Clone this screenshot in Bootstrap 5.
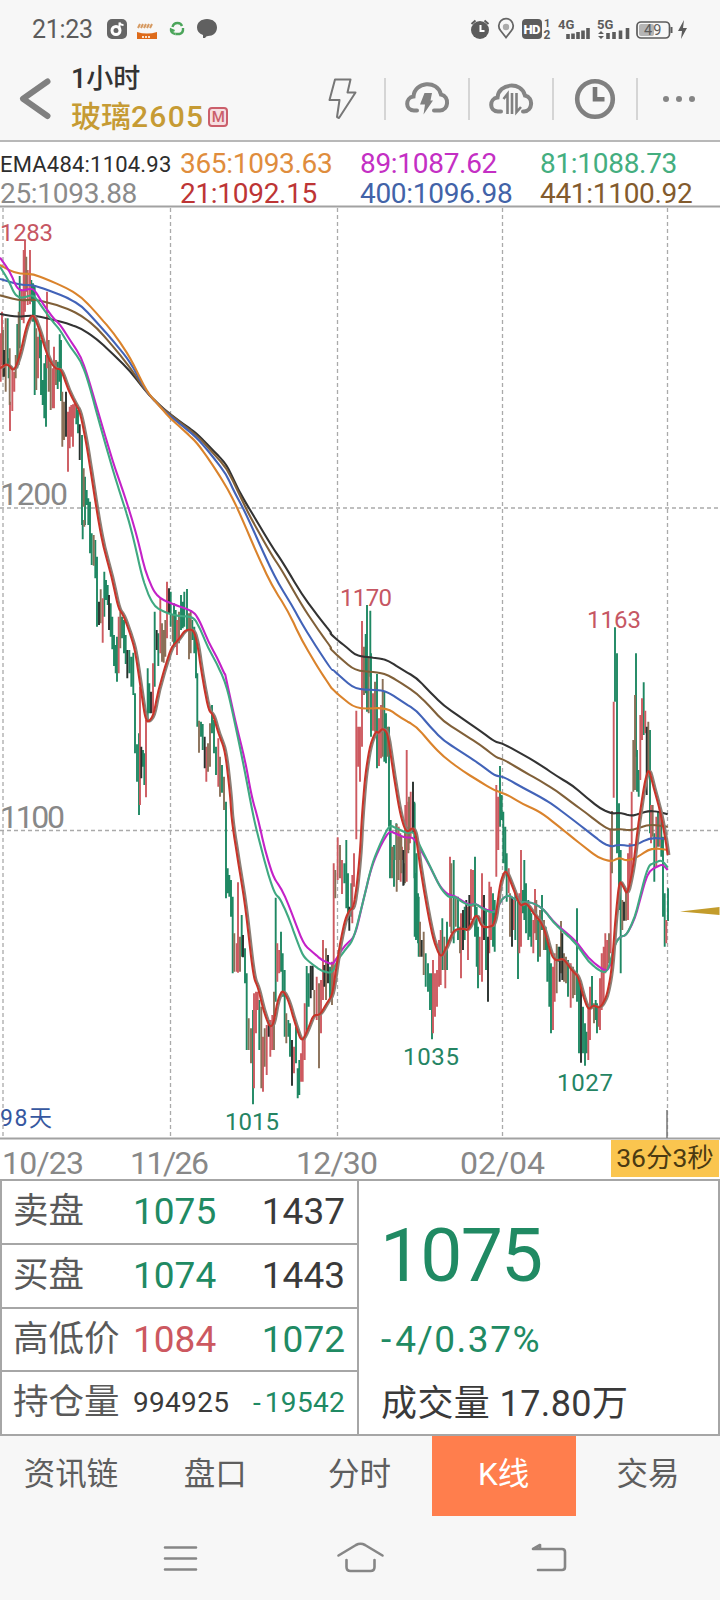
<!DOCTYPE html>
<html lang="zh-CN">
<head>
<meta charset="utf-8">
<meta name="viewport" content="width=device-width, initial-scale=1">
<title>玻璃2605</title>
<link rel="stylesheet" href="https://cdn.jsdelivr.net/npm/bootstrap@5.3.0/dist/css/bootstrap.min.css">
<style>
  body { width: 720px; height: 1600px; overflow: hidden; background: #f7f7f7; color: #3a3a3a;
    font-family: Roboto, "Noto Sans CJK SC", sans-serif; line-height: 1; }
  svg { display: block; flex: none; }
  .status-bar { height: 58px; padding-left: 32px; padding-right: 30px; color: #5c5c5c; }
  .status-time { font-size: 25px; width: 75px; letter-spacing: -.3px; }
  .title-bar { height: 84px; border-bottom: 2px solid #b8b8b8; padding-bottom: 1px; }
  .period { font-size: 27px; line-height: 34px; font-weight: 500; color: #333; margin-left: -1px; }
  .contract { font-size: 30px; line-height: 42px; color: #c69b34; font-weight: 500; margin-left: -1px; }
  .contract span { letter-spacing: 1.3px; font-size: 30px; }
  .m-tag { width: 20px; height: 20px; border: 2px solid #cb5f6b; color: #cb5f6b; background: #f6dfe1; font-size: 15px; }
  .tool { width: 84px; height: 42px; }
  .tool + .tool { border-left: 2px solid #d5d5d5; }
  .legend-row { height: 63px; background: #fff; font-size: 28px; letter-spacing: -.3px; padding-top: 6px; }
  .legend-row > div { width: 180px; height: 30px; line-height: 32px; white-space: nowrap; }
  .legend-row .first { font-size: 22px; letter-spacing: .2px; color: #2d2d2d; line-height: 33px; }
  .chart { height: 974px; background: #fff; }
  .countdown { right: 1px; top: 935px; width: 108px; height: 37px; background: #fac54f; color: #4b3a12; font-size: 26.5px; }
  .quotes { height: 257px; background: #fff; border: 2px solid #a6a6a6; }
  .book { width: 357px; border-right: 2px solid #a6a6a6; }
  .book-row { flex: 1 1 0; padding: 0 12px 0 11px; font-size: 37px; }
  .book-row + .book-row { border-top: 2px solid #a6a6a6; }
  .book-row .lbl { width: 120px; font-size: 35.5px; color: #5a5a5a; white-space: nowrap; }
  .book-row.small-num { font-size: 28px; letter-spacing: .3px; }
  .book-row.small-num .lbl { letter-spacing: 0; }
  .minus { letter-spacing: 4px; }
  .up { color: #cc5860; } .down { color: #208a63; }
  .summary { padding-left: 22px; }
  .last-price { font-size: 75px; line-height: 76px; margin-top: 36px; letter-spacing: -1.8px; margin-left: -1px; }
  .change { font-size: 37px; line-height: 40px; margin-top: 27px; letter-spacing: 1.5px; }
  .volume { font-size: 36px; line-height: 40px; margin-top: 24px; white-space: nowrap; letter-spacing: .4px; }
  .tabs { height: 80px; font-size: 31.5px; color: #5e5e5e; margin-left: -1px; }
  .tabs > div { flex: 1 1 0; padding-bottom: 2px; }
  .tabs .on { background: #ff7e4d; color: #fff; }
  .sys-nav { height: 84px; }
</style>
</head>
<body>
<header>
  <div class="status-bar d-flex align-items-center">
    <div class="status-time">21:23</div>
    <svg width="120" height="24" viewBox="107 17 120 24">
      <rect x="107" y="19" width="20" height="20" rx="5" fill="#666"/>
      <circle cx="116" cy="30.500" r="4" fill="none" stroke="#fff" stroke-width="3"/><path d="M119.500 30V22.500q1 2.500 4 2.500" fill="none" stroke="#fff" stroke-width="2"/>
      <path d="M137 32q10 3 20 0v7h-20z" fill="#de6b1b"/><path d="M138 28l2-4m1 4l2-4m1 4l2-4m1 4l2-4m1 4l2-4" stroke="#d69a62" stroke-width="2"/><path d="M142 37h9" stroke="#fbe0cb" stroke-width="2" stroke-dasharray="2 1"/>
      <g fill="none" stroke="#4ba55a" stroke-width="2.400"><path d="M172.500 27q1-4 5-4 3.500 0 4.500 3"/><path d="M183 28q0.500 5-3.500 6h-4"/><path d="M175.500 34q-5-1-4.500-4.500l3.500 1.500"/></g>
      <path d="M207 19c6 0 10 3.500 10 8.500S213 36 208 36q-2 0-3 2l-2 0v-3c-4-1.500-6-4-6-7.500 0-5 4-8.500 10-8.500z" fill="#606060"/>
    </svg>
    <svg class="ms-auto" width="220" height="24" viewBox="470 17 220 24" font-family="Roboto, sans-serif" fill="#5c5c5c">
      <circle cx="480" cy="30" r="9"/><path d="M471.500 24l4-3.500M488.500 24l-4-3.500" stroke="#5c5c5c" stroke-width="2"/><path d="M480.500 25v6h4" stroke="#fff" stroke-width="2" fill="none"/>
      <path d="M506 37.500l-5.500-7a7.200 7.200 0 1 1 11 0z" fill="none" stroke="#666" stroke-width="1.800"/><circle cx="506" cy="27" r="3.200" fill="#aaa"/>
      <rect x="522" y="19" width="20" height="20" rx="4"/><text x="523.500" y="34" font-size="13" font-weight="900" fill="#fff" textLength="17">HD</text>
      <text x="544" y="27" font-size="11" font-weight="700">1</text><text x="543.500" y="39" font-size="12" font-weight="700">2</text>
      <text x="558" y="28.500" font-size="13" font-weight="700">4G</text>
      <path d="M568 34v5M573 33.500V39M578 32v7M583 30.500V39M588 28v11" stroke="#5c5c5c" stroke-width="3.600"/>
      <text x="597" y="28.500" font-size="13" font-weight="700">5G</text>
      <path d="M608 33v6M614 32v7M620.500 30.500V39M627.500 28v11" stroke="#5c5c5c" stroke-width="3.600"/>
      <path d="M598 34l3-3 3 3zM598 36l3 3 3-3z"/>
      <rect x="637" y="22" width="32.500" height="16" rx="4" fill="none" stroke="#5c5c5c" stroke-width="1.700"/><rect x="639" y="24" width="15" height="12" rx="2" fill="#b5b5b5"/><path d="M671.500 27v6" stroke="#5c5c5c" stroke-width="2"/>
      <text x="644" y="35" font-size="14.500" textLength="17.500">49</text>
      <path d="M684 20l-6 11h4l-1 8 6-11h-4z"/>
    </svg>
  </div>
  <div class="title-bar d-flex">
    <svg width="72" height="82" viewBox="0 58 72 82"><path d="M47.500 81.500L23 98.700l24.500 17.300" fill="none" stroke="#808080" stroke-width="6" stroke-linecap="round" stroke-linejoin="round"/></svg>
    <div class="flex-grow-1 pt-1">
      <div class="period">1小时</div>
      <div class="contract d-flex align-items-center">玻璃<span>2605</span><div class="m-tag d-flex align-items-center justify-content-center ms-1 rounded-1">M</div></div>
    </div>
    <div class="d-flex align-items-center">
      <div class="tool d-flex align-items-center justify-content-center"><svg width="32" height="44" viewBox="328 77 32 44"><path d="M337 79.500h15.500l-3 13h8L341 118l-2-1 2.500-17h-10z" fill="none" stroke="#777" stroke-width="2" stroke-linejoin="round"/></svg></div>
      <div class="tool d-flex align-items-center justify-content-center"><svg width="46" height="36" viewBox="405 81 46 36"><path d="M418 110.500h-3c-9 0-9-13-.5-14 1-15 24-17 27.500-2 9 2 7.500 16-1 16h-6" fill="none" stroke="#858585" stroke-width="4" stroke-linecap="round"/><path d="M425.500 93h7.500l-1.500 7.500h2.500L424.500 114.500l1.500-10h-5z" fill="#808080"/></svg></div>
      <div class="tool d-flex align-items-center justify-content-center"><svg width="46" height="36" viewBox="489 81 46 36"><path d="M502 111.500h-3c-9 0-9-13-.5-14 1-14.500 24-16.500 27.500-2 9 2 7.500 16-1 16h-1" fill="none" stroke="#858585" stroke-width="4" stroke-linecap="round"/><path d="M504.500 99l4-5V114M513 93v21M517.500 93v19l4.500-5" fill="none" stroke="#808080" stroke-width="2.600"/></svg></div>
      <div class="tool d-flex align-items-center justify-content-center"><svg width="42" height="42" viewBox="576 78 42 42"><circle cx="597" cy="99" r="17.800" fill="none" stroke="#808080" stroke-width="4.600"/><path d="M597 87v12.300h9.500" fill="none" stroke="#777" stroke-width="4.600"/></svg></div>
      <div class="tool d-flex align-items-center justify-content-center"><svg width="34" height="8" viewBox="0 0 34 8" fill="#858585"><circle cx="4" cy="4" r="3"/><circle cx="17" cy="4" r="3"/><circle cx="30" cy="4" r="3"/></svg></div>
    </div>
  </div>
</header>

<section class="legend-row d-flex flex-wrap align-content-start">
  <div class="first">EMA484:1104.93</div><div style="color:#df8d3d">365:1093.63</div><div style="color:#c42fc4">89:1087.62</div><div style="color:#44ae7f">81:1088.73</div>
  <div style="color:#8b8b8b">25:1093.88</div><div style="color:#bd3535">21:1092.15</div><div style="color:#4263a8">400:1096.98</div><div style="color:#835b2d">441:1100.92</div>
</section>

<section class="chart position-relative">
  <svg id="kline" width="720" height="974" viewBox="0 205 720 974" font-family="Roboto, 'Noto Sans CJK SC', sans-serif">
    <path d="M0 206.500H720M0 1138.500H720" stroke="#a2a2a2" stroke-width="2.200"/>
    <path d="M3 208V1136M170.500 208V1136M337.500 208V1136M502.500 208V1136M667.500 208V1136M0 508H720M0 830.500H720" stroke="#aaa" stroke-width="1.300" stroke-dasharray="4 3"/>
    <path d="M667 1110V1138" stroke="#777" stroke-width="1.500"/>
    <g id="bars" stroke-width="1.900"></g>
    <g id="lines" fill="none" stroke-width="2.100" stroke-linejoin="round"></g>
    <path d="M680 911.500L719.500 907V915z" fill="#c39c2c"/>
    <g font-size="24" fill="#c65763">
      <text x="0" y="240.500" textLength="53">1283</text><text x="340" y="605.500" textLength="52">1170</text><text x="587" y="628" textLength="54">1163</text>
    </g>
    <g font-size="24" fill="#258463">
      <text x="403" y="1064.500" textLength="56">1035</text><text x="557" y="1091" textLength="56">1027</text><text x="225" y="1129.500" textLength="54">1015</text>
    </g>
    <text x="0" y="1126" font-size="23" fill="#3657a0" textLength="52">98天</text>
    <g font-size="32" fill="#888">
      <text x="0" y="505" textLength="68">1200</text><text x="0" y="828" textLength="65">1100</text>
      <text x="2" y="1174" textLength="82">10/23</text><text x="130" y="1174" textLength="79">11/26</text><text x="296" y="1174" textLength="82">12/30</text><text x="460" y="1174" textLength="85">02/04</text>
    </g>
  </svg>
  <div class="countdown position-absolute d-flex align-items-center justify-content-center">36分3秒</div>
</section>

<section class="quotes d-flex">
  <div class="book d-flex flex-column">
    <div class="book-row d-flex align-items-center"><span class="lbl">卖盘</span><span class="down">1075</span><span class="ms-auto">1437</span></div>
    <div class="book-row d-flex align-items-center"><span class="lbl">买盘</span><span class="down">1074</span><span class="ms-auto">1443</span></div>
    <div class="book-row d-flex align-items-center"><span class="lbl">高低价</span><span class="up">1084</span><span class="ms-auto down">1072</span></div>
    <div class="book-row small-num d-flex align-items-center"><span class="lbl">持仓量</span><span>994925</span><span class="ms-auto down"><span class="minus">-</span>19542</span></div>
  </div>
  <div class="summary">
    <div class="last-price down">1075</div>
    <div class="change down"><span class="minus">-</span>4/0.37%</div>
    <div class="volume">成交量 17.80万</div>
  </div>
</section>

<nav class="tabs d-flex text-center">
  <div class="d-flex align-items-center justify-content-center">资讯链</div>
  <div class="d-flex align-items-center justify-content-center">盘口</div>
  <div class="d-flex align-items-center justify-content-center">分时</div>
  <div class="on d-flex align-items-center justify-content-center">K线</div>
  <div class="d-flex align-items-center justify-content-center">交易</div>
</nav>
<footer class="sys-nav">
  <svg width="720" height="84" viewBox="0 1516 720 84" fill="none" stroke="#868686" stroke-width="2.600" stroke-linecap="round" stroke-linejoin="round">
    <path d="M165 1547.500h31M165 1558.500h31M165 1569.500h31"/>
    <path d="M338.500 1555.500L356 1545q4.500-2.500 9 0l17.500 10.500M346.500 1560v7q0 4 4 4h20q4 0 4-4v-7"/>
    <path d="M533 1549h29q3 0 3 3v15q0 3-3 3h-24M533 1549l7-4v4"/>
  </svg>
</footer>

<script src="https://cdn.jsdelivr.net/npm/bootstrap@5.3.0/dist/js/bootstrap.bundle.min.js"></script>
<script>
// Price data is stored per chart tile: tile origin in px, values in thirds of a px.
const origin = { A:[0,205], B:[0,520], C:[180,820], D:[320,560], E:[400,740], F:[540,590], G:[225,490] };
const px = (t, x, y) => [origin[t][0] + x / 3, origin[t][1] + y / 3];

// Each bar: x, high, low, kind (r rising, g falling, m mixed, k flat)
const bars = {
A:"2,385,530,r 6,320,480,r 9,375,515,m 12,435,515,k 17,340,560,m 23,340,480,g 26,460,520,g 29,430,600,m 30,590,678,r 37,490,618,r 43,500,560,r 47,450,520,m 52,357,490,g 56,320,480,m 59,213,430,g 65,255,345,r 71,135,355,r 75,105,320,r 79,155,260,m 83,195,300,r 90,135,298,r 94,225,290,g 99,235,350,g 104,240,570,g 109,370,555,m 114,395,520,r 119,370,460,g 123,405,570,g 128,525,600,g 133,475,640,g 138,450,665,g 141,260,490,r 146,405,560,m 152,475,615,m 158,490,610,r 162,425,610,r 168,465,540,m 173,470,552,g 179,388,530,g 183,405,588,g 187,560,725,m 192,590,705,m 198,560,695,k 204,620,800,r 209,605,730,r 214,600,695,r 219,598,725,r 224,595,640,r 229,600,658,g 234,615,685,g 239,658,765,k 246,690,960,g 251,790,905,m 255,815,960,g 260,855,900,g 265,880,960,g 270,890,960,g",
B:"248,0,58,g 253,0,20,m 265,0,10,g 270,0,100,g 275,40,135,g 281,45,137,m 286,60,175,g 291,110,320,g 297,245,315,k 302,208,310,m 308,235,368,r 313,155,290,g 318,180,240,g 323,195,255,g 327,225,330,k 332,250,350,g 337,290,388,g 342,345,438,g 347,375,460,g 351,350,485,g 356,290,460,r 361,275,385,m 366,290,355,g 372,300,400,g 377,345,432,g 382,390,475,k 388,390,460,g 394,410,500,g 400,398,525,g 405,520,700,g 411,673,785,g 417,640,885,g 420,500,855,r 424,680,775,k 429,690,740,g 433,700,795,g 438,600,832,r 443,445,605,g 448,490,580,g 453,515,580,k 459,430,580,r 464,275,500,g 470,330,390,k 475,340,438,g 481,235,400,r 486,310,425,m 491,330,428,m 496,300,410,m 501,185,355,r 507,205,280,k 512,215,320,g 518,285,365,m 522,250,380,g 527,270,380,g 531,300,405,r 537,275,370,m 543,225,330,g 548,245,325,g 553,215,320,g 561,207,330,g 567,280,418,m 572,270,400,m 577,300,360,g 583,320,400,g 588,340,475,g 592,460,620,g 597,602,698,m 603,605,650,g 608,612,690,g 614,650,745,k 619,680,785,r 624,670,755,m 630,610,740,m 636,555,640,g 642,600,700,g 648,680,765,g 655,655,800,r 660,710,830,m 666,735,818,g 672,770,870,m 678,845,960,g",
C:"138,0,235,g 143,145,220,g 148,165,230,g 153,180,290,g 158,230,460,g 163,340,455,m 170,370,455,r 174,187,458,r 180,350,455,m 185,285,410,g 189,345,412,k 195,385,490,g 200,460,690,g 206,595,690,m 213,625,730,m 219,570,853,g 222,520,805,r 228,515,640,r 233,515,570,r 238,540,690,g 244,560,805,m 249,650,815,r 254,625,740,m 260,615,765,r 266,600,650,k 271,600,710,r 277,585,690,r 282,515,690,m 287,233,545,g 292,370,485,r 298,390,460,r 303,335,455,g 308,400,530,g 314,450,650,g 319,580,670,m 325,600,650,g 330,610,710,g 336,660,797,k 342,680,760,r 348,620,730,g 353,745,835,g 358,720,825,g 363,700,785,r 368,660,785,r 374,550,720,r 380,438,640,g 386,460,560,g 392,437,535,k 398,437,510,k 403,510,590,m 410,470,600,r 417,490,745,m 423,480,640,r 429,360,540,r 433,435,500,k 438,385,540,m 444,405,490,k 450,440,540,g 456,425,555,m 461,130,520,r 466,150,235,m 473,52,180,r 480,75,175,m 486,120,222,r 493,130,190,g 499,60,265,g 504,160,300,g 508,260,332,k 514,190,290,g 517,165,310,r 522,100,200,r 630,15,175,g 636,80,175,m 642,75,200,g 650,12,215,m 656,50,180,m 662,90,185,r 671,130,195,k 678,60,180,r 685,20,100,m 690,0,70,r 704,50,350,g 710,100,355,g 716,230,410,g",
D:"109,452,838,r 115,500,620,r 120,500,665,r 126,183,560,r 132,260,405,m 137,222,400,g 141,135,455,g 146,290,460,m 151,152,350,g 153,280,530,g 159,400,512,r 165,365,515,m 171,342,625,g 177,475,618,r 183,435,595,r 188,357,590,m 193,395,605,g 198,460,610,g 203,500,590,m 207,500,800,g 212,780,900,g 218,860,900,m 229,790,900,g 236,800,900,r 241,820,900,m 246,860,900,r 256,735,860,r 267,710,850,m 272,695,830,r 284,730,880,g",
E:"4,290,400,m 10,330,437,k 15,270,430,m 20,30,425,r 26,185,330,r 32,155,290,r 39,125,280,k 43,185,415,g 48,400,600,g 54,460,610,g 60,545,650,m 65,600,650,k 71,575,705,m 77,640,740,g 84,670,755,g 90,700,810,g 96,700,898,g 99,660,880,r 105,700,830,r 111,690,800,r 117,600,740,r 122,570,735,r 127,535,690,g 133,590,690,m 136,620,745,r 141,545,690,g 150,350,560,r 154,370,580,m 161,360,610,g 167,475,560,m 174,470,600,g 180,560,640,m 183,520,715,r 189,510,630,k 194,500,600,g 199,480,565,k 204,500,660,r 208,465,560,k 213,388,540,r 219,390,500,r 225,350,590,g 230,500,680,g 234,560,745,g 239,590,705,r 246,400,725,r 252,465,600,k 258,510,690,g 264,590,785,k 268,425,640,r 273,440,600,r 279,460,620,g 284,480,635,g 289,135,410,r 295,170,330,r 300,78,260,g 305,165,240,g 310,215,370,g 316,260,400,g 320,340,485,g 326,385,460,r 330,460,590,m 336,470,620,k 341,480,570,r 346,450,600,g 354,480,717,g 358,460,640,r 363,330,620,r 368,450,520,g 373,360,540,g 378,430,580,g 385,480,600,g 390,500,590,g 394,520,620,g 400,540,640,r 405,447,580,r 409,480,600,m 414,540,665,g 420,510,650,m 426,465,570,g 432,540,630,m 437,560,630,g 442,600,725,g 448,620,800,g 453,670,880,g 459,680,870,r 464,640,785,r 470,612,760,m 475,620,665,g 479,620,725,k 483,543,700,m 487,580,720,k 492,640,725,m 498,650,730,m 504,660,770,g 512,670,803,r 519,680,775,m 524,700,765,m 531,505,785,g 537,720,940,g 543,740,968,k 549,800,940,g 555,850,977,g 560,875,940,g 565,800,960,r 570,740,900,r 576,708,800,g 582,790,850,m 587,780,840,g 591,790,880,g 596,800,860,r 600,715,870,r 605,640,810,r 611,620,790,r 616,580,700,r 622,600,690,r 627,580,670,m 632,270,640,r 636,213,400,m",
F:"221,335,623,r 225,112,335,g 231,190,790,g 237,640,960,g 242,780,1150,g 247,930,1020,m 252,935,992,k 258,900,992,m 264,790,990,r 269,760,880,r 275,605,870,r 280,450,605,m 285,315,600,m 288,190,500,g 291,480,605,g 296,540,620,g 301,375,570,r 306,325,450,r 311,277,435,g 316,362,430,r 320,410,615,k 325,395,560,m 330,420,730,g 333,645,760,r 338,645,740,m 343,730,875,g 349,680,830,r 354,665,770,g 359,650,770,r 364,670,800,g 369,740,980,g 374,910,1070,g 379,990,1060,r 384,895,993,g"
};
const tone = { r:"#cd5a60", g:"#1f8863", m:"#8a7058", k:"#27302c" };
const paths = { r:"", g:"", m:"", k:"" };
for (const t in bars) for (const b of bars[t].split(" ")) {
  const [x, hi, lo, k] = b.split(",");
  const p = px(t, +x, +hi), q = px(t, +x, +lo);
  paths[k] += `M${p[0].toFixed(1)} ${p[1].toFixed(1)}V${q[1].toFixed(1)}`;
}
document.getElementById("bars").innerHTML =
  ["g", "r", "m", "k"].map(k => `<path d="${paths[k]}" stroke="${tone[k]}"/>`).join("");

// Moving averages: colour, then the points of each tile in turn
const redPts = "A 0,490 22,475 42,500 60,450 80,360 98,325 115,365 135,430 150,470 168,492 183,492 205,555 225,595 240,620 260,720 280,850 B 295,0 310,80 335,170 355,265 370,285 390,340 405,390 420,490 438,612 460,590 475,510 500,425 515,380 535,360 555,330 580,328 592,370 605,460 625,570 640,585 655,640 675,690 690,820 C 155,0 175,130 195,250 220,470 235,505 250,570 268,620 280,615 292,545 307,508 325,540 345,610 365,668 385,625 400,585 420,585 440,550 457,525 468,450 480,370 495,300 508,270 520,265 530,200 540,100 D 125,780 135,650 150,555 168,512 175,520 188,505 203,520 220,640 240,760 258,820 284,798 E 60,380 80,500 100,600 122,655 140,620 160,570 190,565 205,572 228,518 245,560 262,562 284,556 300,430 316,388 330,420 360,500 378,487 400,520 430,555 455,650 470,662 490,655 515,690 535,710 550,770 565,810 580,795 600,805 620,770 635,690 F 225,1000 238,870 250,890 262,915 280,830 295,700 315,570 327,535 340,590 360,660 375,740 383,795";
const lines = [
["#333", "A 0,327 50,336 100,331 150,342 200,355 245,371 290,402 340,448 390,498 440,562 480,602 511,628 550,657 590,685 640,737 680,778 G 40,0 80,68 140,168 175,220 230,312 280,380 320,430 D 30,220 53,241 80,262 105,284 130,290 180,295 205,302 245,328 290,354 330,396 370,436 430,478 480,512 525,545 550,551 610,584 660,614 E 470,108 520,138 560,173 600,205 F 215,671 240,668 275,678 300,670 325,663 350,664 383,673"],
["#806039", "A 0,271 60,287 100,283 150,294 200,310 245,332 290,368 340,425 390,487 440,562 480,603 511,630 590,690 640,745 680,790 G 37,0 75,80 140,195 170,240 230,345 280,420 320,475 D 30,265 53,287 105,332 175,337 205,346 245,370 290,400 330,440 370,484 430,522 480,554 530,593 550,598 610,634 F 0,572 50,603 90,634 140,670 180,702 210,720 245,717 275,722 325,703 383,710"],
["#4263b8", "A 0,222 60,240 100,240 150,258 200,277 245,303 290,352 340,408 390,470 440,562 480,605 511,634 590,697 640,757 680,810 G 25,0 60,65 130,220 160,280 200,345 230,400 270,465 320,540 D 40,330 53,343 105,388 180,390 205,397 245,424 290,452 330,500 370,541 430,580 480,613 525,647 550,650 610,684 F 0,620 40,645 100,690 160,737 190,760 213,770 235,764 280,769 330,743 383,747"],
["#da832c", "A 0,180 30,197 60,206 100,207 150,227 200,249 245,277 290,325 340,383 390,456 440,560 480,605 511,640 550,675 590,712 640,782 G 10,0 40,60 100,200 140,285 190,365 230,450 280,535 320,595 D 35,385 53,402 108,447 200,443 245,475 290,500 330,548 370,590 430,634 480,665 525,692 560,703 610,733 F 0,665 60,712 100,745 140,776 175,803 213,815 238,803 260,812 290,803 325,779 350,775 383,780"],
["#c422c8", "A 0,158 30,200 50,248 65,257 85,252 102,252 130,298 160,340 180,358 210,405 243,455 265,520 300,640 340,775 370,860 B 397,0 415,65 435,150 460,212 480,235 511,250 580,273 600,305 625,365 650,410 675,465 G 0,550 30,690 60,810 80,920 100,990 C 255,90 280,172 305,207 330,265 370,372 400,398 425,420 457,434 470,415 495,375 525,350 550,240 575,140 600,80 628,32 650,42 675,53 700,52 E 60,325 90,380 120,440 145,465 165,468 190,485 210,495 225,490 250,505 275,515 290,512 305,477 325,465 345,478 365,487 395,487 430,506 460,545 490,570 530,605 565,655 610,690 628,690 645,610 660,590 680,585 F 285,985 300,930 315,875 328,843 350,830 368,823 383,840"],
["#40a982", "A 0,185 25,225 45,270 65,280 100,268 125,305 160,352 180,375 210,425 243,468 265,530 300,660 340,800 370,895 B 386,0 405,75 425,165 445,225 465,260 490,275 530,288 580,290 600,325 625,385 650,430 675,485 690,540 C 190,-170 222,0 245,90 265,165 285,222 300,235 325,290 350,360 370,410 400,435 425,453 457,460 470,425 495,390 520,360 548,250 575,135 600,72 628,15 650,25 680,40 702,35 E 60,318 90,378 120,442 145,472 165,470 190,488 210,497 225,490 250,508 275,518 288,512 305,477 325,465 345,478 365,487 395,487 430,506 460,547 490,575 530,612 565,665 600,693 622,698 645,612 660,590 680,585 F 285,980 300,920 315,860 328,825 345,818 365,810 383,832"],
["#8b7f76", redPts, 1.7],
["#c83429", redPts, 0]
];
// Round each corner slightly: quarter points as ends, the data point as control
const smooth = pts => {
  const f = n => n.toFixed(1);
  let d = `M${f(pts[0][0])} ${f(pts[0][1])}`;
  for (let i = 1; i < pts.length - 1; i++) {
    const [a, b, c] = [pts[i - 1], pts[i], pts[i + 1]];
    const s = [b[0] + (a[0] - b[0]) * .4, b[1] + (a[1] - b[1]) * .4];
    const e = [b[0] + (c[0] - b[0]) * .4, b[1] + (c[1] - b[1]) * .4];
    d += `L${f(s[0])} ${f(s[1])}Q${f(b[0])} ${f(b[1])} ${f(e[0])} ${f(e[1])}`;
  }
  const z = pts[pts.length - 1];
  return d + `L${f(z[0])} ${f(z[1])}`;
};
document.getElementById("lines").innerHTML = lines.map(([c, s, dx]) => {
  let t; const pts = [];
  for (const w of s.split(" ")) {
    if (w.length === 1) { t = w; continue; }
    const [x, y] = w.split(",").map(Number), p = px(t, x, y);
    pts.push([p[0] + (dx || 0), p[1]]);
  }
  return `<path d="${smooth(pts)}" stroke="${c}"/>`;
}).join("");
</script>
</body>
</html>
